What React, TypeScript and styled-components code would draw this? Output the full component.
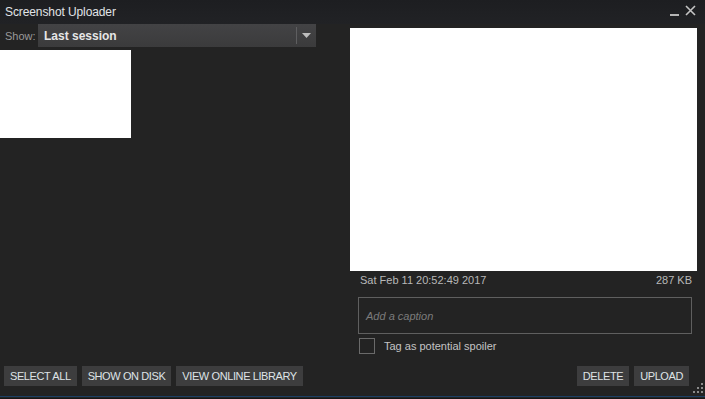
import * as React from 'react';
import styled, { createGlobalStyle } from 'styled-components';

const GlobalStyle = createGlobalStyle`
  html, body {
    margin: 0;
    padding: 0;
    background: #232323;
  }
  body {
    font-family: Arial, "Liberation Sans", sans-serif;
  }
`;

const Window = styled.div`
  width: 705px;
  height: 399px;
  display: flex;
  flex-direction: column;
  background: #232323;
  position: relative;
  overflow: hidden;
  border-bottom: 1px solid #161616;
  box-sizing: border-box;
  &::after {
    content: '';
    position: absolute;
    left: 0;
    right: 0;
    bottom: 1px;
    height: 1px;
    background: #1d4064;
  }
`;

const TitleBar = styled.div`
  height: 24px;
  flex-shrink: 0;
  display: flex;
  align-items: flex-start;
  justify-content: space-between;
  background: linear-gradient(#1d1e21, #212225);
  color: #e1e4e7;
  font-size: 12px;
  h1 {
    margin: 5px 0 0 5px;
    font-size: 12px;
    font-weight: normal;
    letter-spacing: -0.1px;
  }
`;

const WindowControls = styled.div`
  display: flex;
  align-items: flex-start;
  gap: 6px;
  margin: 5px 9px 0 0;
  svg {
    display: block;
  }
`;

const Body = styled.div`
  flex: 1;
  display: flex;
  min-height: 0;
`;

const LeftPane = styled.div`
  width: 345px;
  display: flex;
  flex-direction: column;
`;

const ShowRow = styled.div`
  display: flex;
  align-items: center;
  height: 23px;
  color: #9a9a9a;
  font-size: 11px;
  span {
    width: 38px;
    padding-left: 5px;
    box-sizing: border-box;
  }
`;

const Dropdown = styled.div`
  width: 278px;
  height: 23px;
  display: flex;
  align-items: center;
  background: linear-gradient(#434345, #3b3b3c);
  color: #e6e6e6;
  font-size: 12px;
  font-weight: bold;
  .value {
    flex: 1;
    padding-left: 6px;
  }
  .divider {
    width: 1px;
    height: 17px;
    background: #5e5e60;
  }
  .arrow {
    width: 19px;
    display: flex;
    justify-content: center;
  }
`;

const ThumbGrid = styled.div`
  flex: 1;
  display: flex;
  flex-wrap: wrap;
  align-content: flex-start;
  padding-top: 3px;
`;

const Thumb = styled.div`
  width: 131px;
  height: 88px;
  background: #ffffff;
`;

const ButtonRow = styled.div<{ $align?: 'left' | 'right' }>`
  display: flex;
  gap: 5px;
  justify-content: ${(p) => (p.$align === 'right' ? 'flex-end' : 'flex-start')};
  padding: 0 ${(p) => (p.$align === 'right' ? '16px' : '0')} 12px
    ${(p) => (p.$align === 'right' ? '0' : '4px')};
`;

const Button = styled.button`
  height: 20px;
  padding: 0 6px;
  border: none;
  background: #3d3d3e;
  color: #dfe3e6;
  font-family: Arial, "Liberation Sans", sans-serif;
  font-size: 11px;
  text-transform: uppercase;
  letter-spacing: -0.4px;
  cursor: pointer;
`;

const RightPane = styled.div`
  flex: 1;
  display: flex;
  flex-direction: column;
  padding-top: 4px;
  padding-left: 5px;
`;

const Preview = styled.div`
  width: 347px;
  height: 243px;
  background: #ffffff;
`;

const MetaRow = styled.div`
  display: flex;
  justify-content: space-between;
  padding: 3px 13px 0 10px;
  color: #b8b8b8;
  font-size: 11px;
  height: 14px;
`;

const Caption = styled.div`
  margin: 9px 0 0 8px;
  width: 334px;
  height: 37px;
  box-sizing: border-box;
  border: 1px solid #5f5f5f;
  display: flex;
  align-items: center;
  padding-left: 7px;
  color: #7c7c7c;
  font-size: 11px;
  font-style: italic;
`;

const CheckRow = styled.label`
  display: flex;
  align-items: center;
  gap: 9px;
  margin: 4px 0 0 9px;
  color: #c4c4c4;
  font-size: 11px;
`;

const Box = styled.span`
  width: 16px;
  height: 16px;
  box-sizing: border-box;
  border: 1px solid #6a6a6a;
`;

const Spacer = styled.div`
  flex: 1;
`;

const Grip = styled.svg`
  position: absolute;
  right: 2px;
  bottom: 5px;
`;

const App: React.FC = () => {
  return (
    <Window>
      <GlobalStyle />
      <TitleBar>
        <h1>Screenshot Uploader</h1>
        <WindowControls>
          <svg width="9" height="12" viewBox="0 0 9 12">
            <rect x="0" y="9" width="9" height="2" fill="#b5b5b5" />
          </svg>
          <svg width="11" height="11" viewBox="0 0 11 11">
            <path d="M1 1 L10 10 M10 1 L1 10" stroke="#c4c4c4" strokeWidth="1.6" />
          </svg>
        </WindowControls>
      </TitleBar>
      <Body>
        <LeftPane>
          <ShowRow>
            <span>Show:</span>
            <Dropdown>
              <div className="value">Last session</div>
              <div className="divider" />
              <div className="arrow">
                <svg width="9" height="5" viewBox="0 0 9 5">
                  <path d="M0 0 H9 L4.5 5 Z" fill="#bdbdbd" />
                </svg>
              </div>
            </Dropdown>
          </ShowRow>
          <ThumbGrid>
            <Thumb />
          </ThumbGrid>
          <ButtonRow>
            <Button>Select All</Button>
            <Button>Show on Disk</Button>
            <Button>View Online Library</Button>
          </ButtonRow>
        </LeftPane>
        <RightPane>
          <Preview />
          <MetaRow>
            <span>Sat Feb 11 20:52:49 2017</span>
            <span>287 KB</span>
          </MetaRow>
          <Caption>Add a caption</Caption>
          <CheckRow>
            <Box />
            Tag as potential spoiler
          </CheckRow>
          <Spacer />
          <ButtonRow $align="right">
            <Button>Delete</Button>
            <Button>Upload</Button>
          </ButtonRow>
        </RightPane>
      </Body>
      <Grip width="10" height="10" viewBox="0 0 10 10">
        <rect x="8" y="0" width="2" height="2" fill="#8a8a8a" />
        <rect x="4" y="4" width="2" height="2" fill="#8a8a8a" />
        <rect x="8" y="4" width="2" height="2" fill="#8a8a8a" />
        <rect x="0" y="8" width="2" height="2" fill="#8a8a8a" />
        <rect x="4" y="8" width="2" height="2" fill="#8a8a8a" />
        <rect x="8" y="8" width="2" height="2" fill="#8a8a8a" />
      </Grip>
    </Window>
  );
};

export default App;
